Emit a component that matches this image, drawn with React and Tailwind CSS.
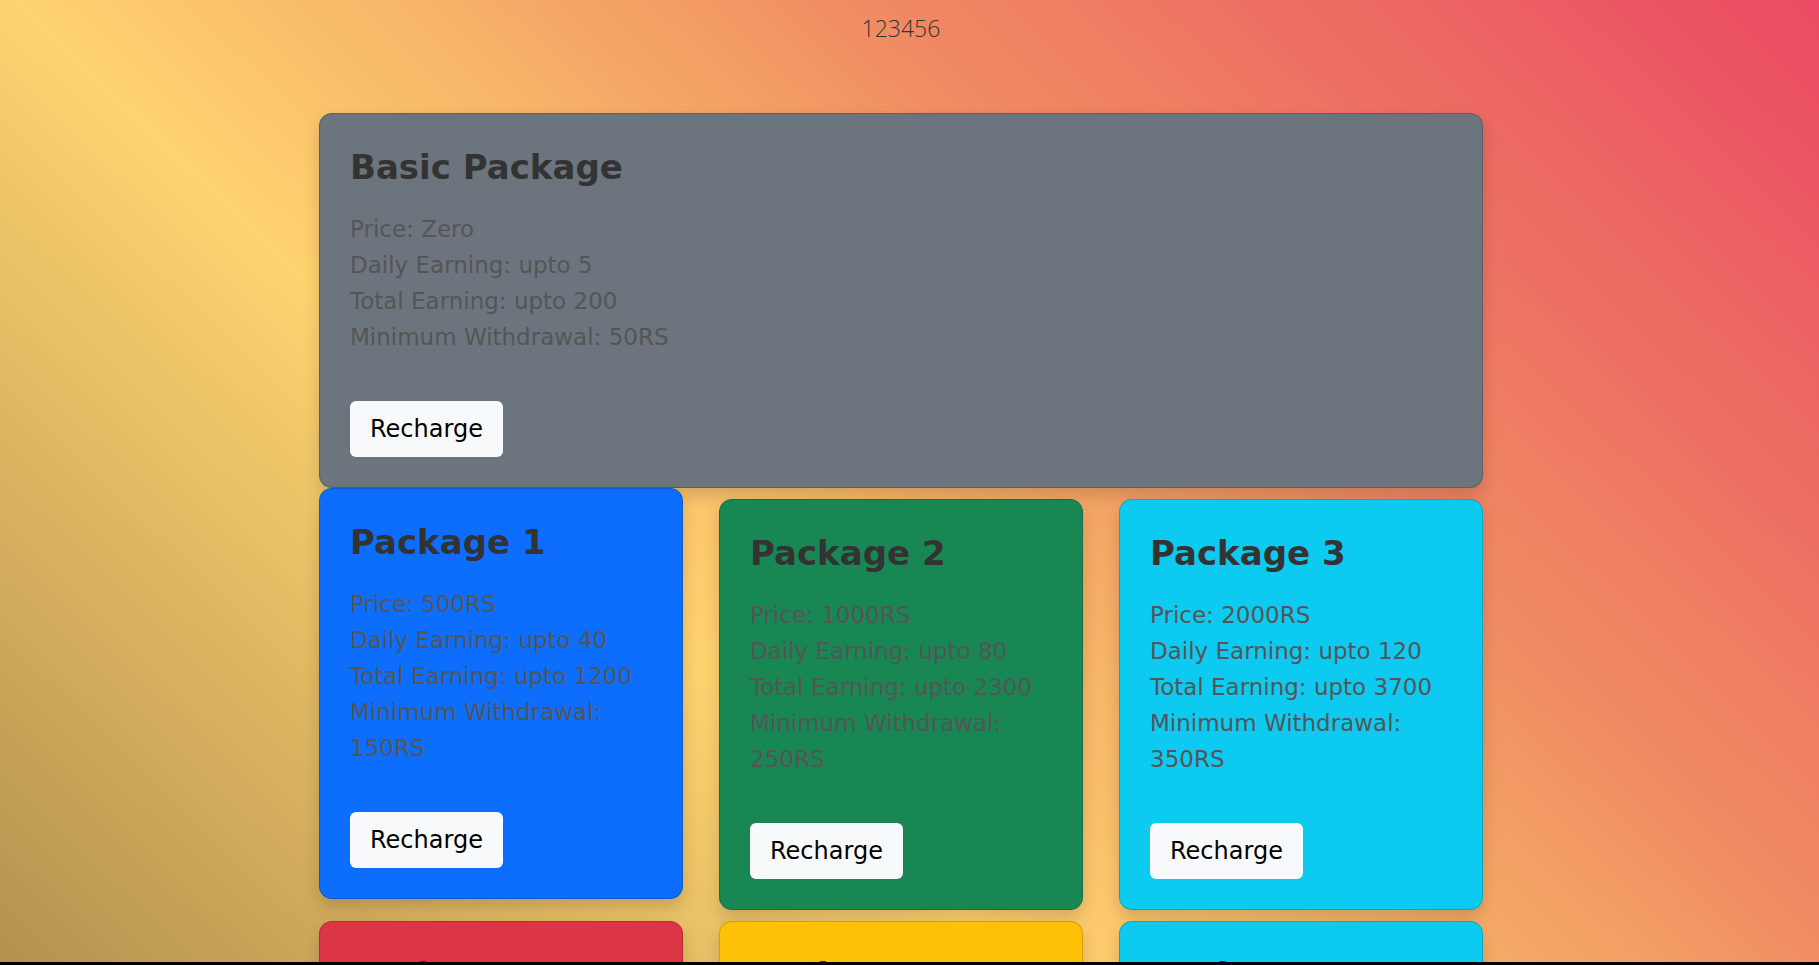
import React from "react";

const packages = [
  { title: "Package 1", bg: "bg-[#0d6efd]", price: "500RS", daily: "40", total: "1200", min: "150RS", offset: "" },
  { title: "Package 2", bg: "bg-[#198754]", price: "1000RS", daily: "80", total: "2300", min: "250RS", offset: "mt-[11px]" },
  { title: "Package 3", bg: "bg-[#0dcaf0]", price: "2000RS", daily: "120", total: "3700", min: "350RS", offset: "mt-[11px]" },
];

const nextPackages = [
  { title: "Package 4", bg: "bg-[#dc3545]", price: "5000RS", daily: "250", total: "8000", min: "500RS", offset: "" },
  { title: "Package 5", bg: "bg-[#ffc107]", price: "10000RS", daily: "500", total: "16000", min: "1000RS", offset: "" },
  { title: "Package 6", bg: "bg-[#0dcaf0]", price: "20000RS", daily: "1000", total: "32000", min: "2000RS", offset: "" },
];

const PackageCard = ({ title, bg, price, daily, total, min, className = "" }) => (
  <div
    className={`${bg} ${className} rounded-[13px] border border-black/[0.175] p-[30px] shadow-[0_8px_16px_rgba(0,0,0,0.15)]`}
  >
    <h2 className="text-[34px] leading-[46px] font-bold text-[#333] mb-[21px]">{title}</h2>
    <div className="text-[23px] leading-[36px] text-[#555]">
      <p>Price: {price}</p>
      <p>Daily Earning: upto {daily}</p>
      <p>Total Earning: upto {total}</p>
      <p>Minimum Withdrawal: {min}</p>
    </div>
    <button className="mt-[46px] h-[56px] px-[20px] rounded-[6px] bg-[#f8f9fa] text-black text-[24px] leading-[36px]">
      Recharge
    </button>
  </div>
);

export default function App() {
  return (
    <div
      className="min-h-screen bg-fixed bg-[linear-gradient(44deg,#b3924f_0%,#fed26f_36%,#f7b468_50%,#f08d62_65%,#ea4a63_100%)] pr-[17px] pb-10"
      style={{ fontFamily: '"DejaVu Sans", sans-serif' }}
    >
      <div className="pt-[14px] text-center text-[23px] leading-[28px] font-light text-[#333]" style={{ fontFamily: '"Open Sans", sans-serif' }}>
        123456
      </div>

      <div className="mx-auto w-[1164px] mt-[71px]">
        <PackageCard
          title="Basic Package"
          bg="bg-[#6c757d]"
          price="Zero"
          daily="5"
          total="200"
          min="50RS"
        />

        <div className="grid grid-cols-3 gap-x-[36px] items-start">
          {packages.map((p) => (
            <PackageCard key={p.title} {...p} className={p.offset} />
          ))}
        </div>

        <div className="grid grid-cols-3 gap-x-[36px] items-start mt-[11px]">
          {nextPackages.map((p) => (
            <PackageCard key={p.title} {...p} />
          ))}
        </div>
      </div>

      <div className="fixed bottom-0 left-0 right-0 h-[3px] bg-black" />
    </div>
  );
}
